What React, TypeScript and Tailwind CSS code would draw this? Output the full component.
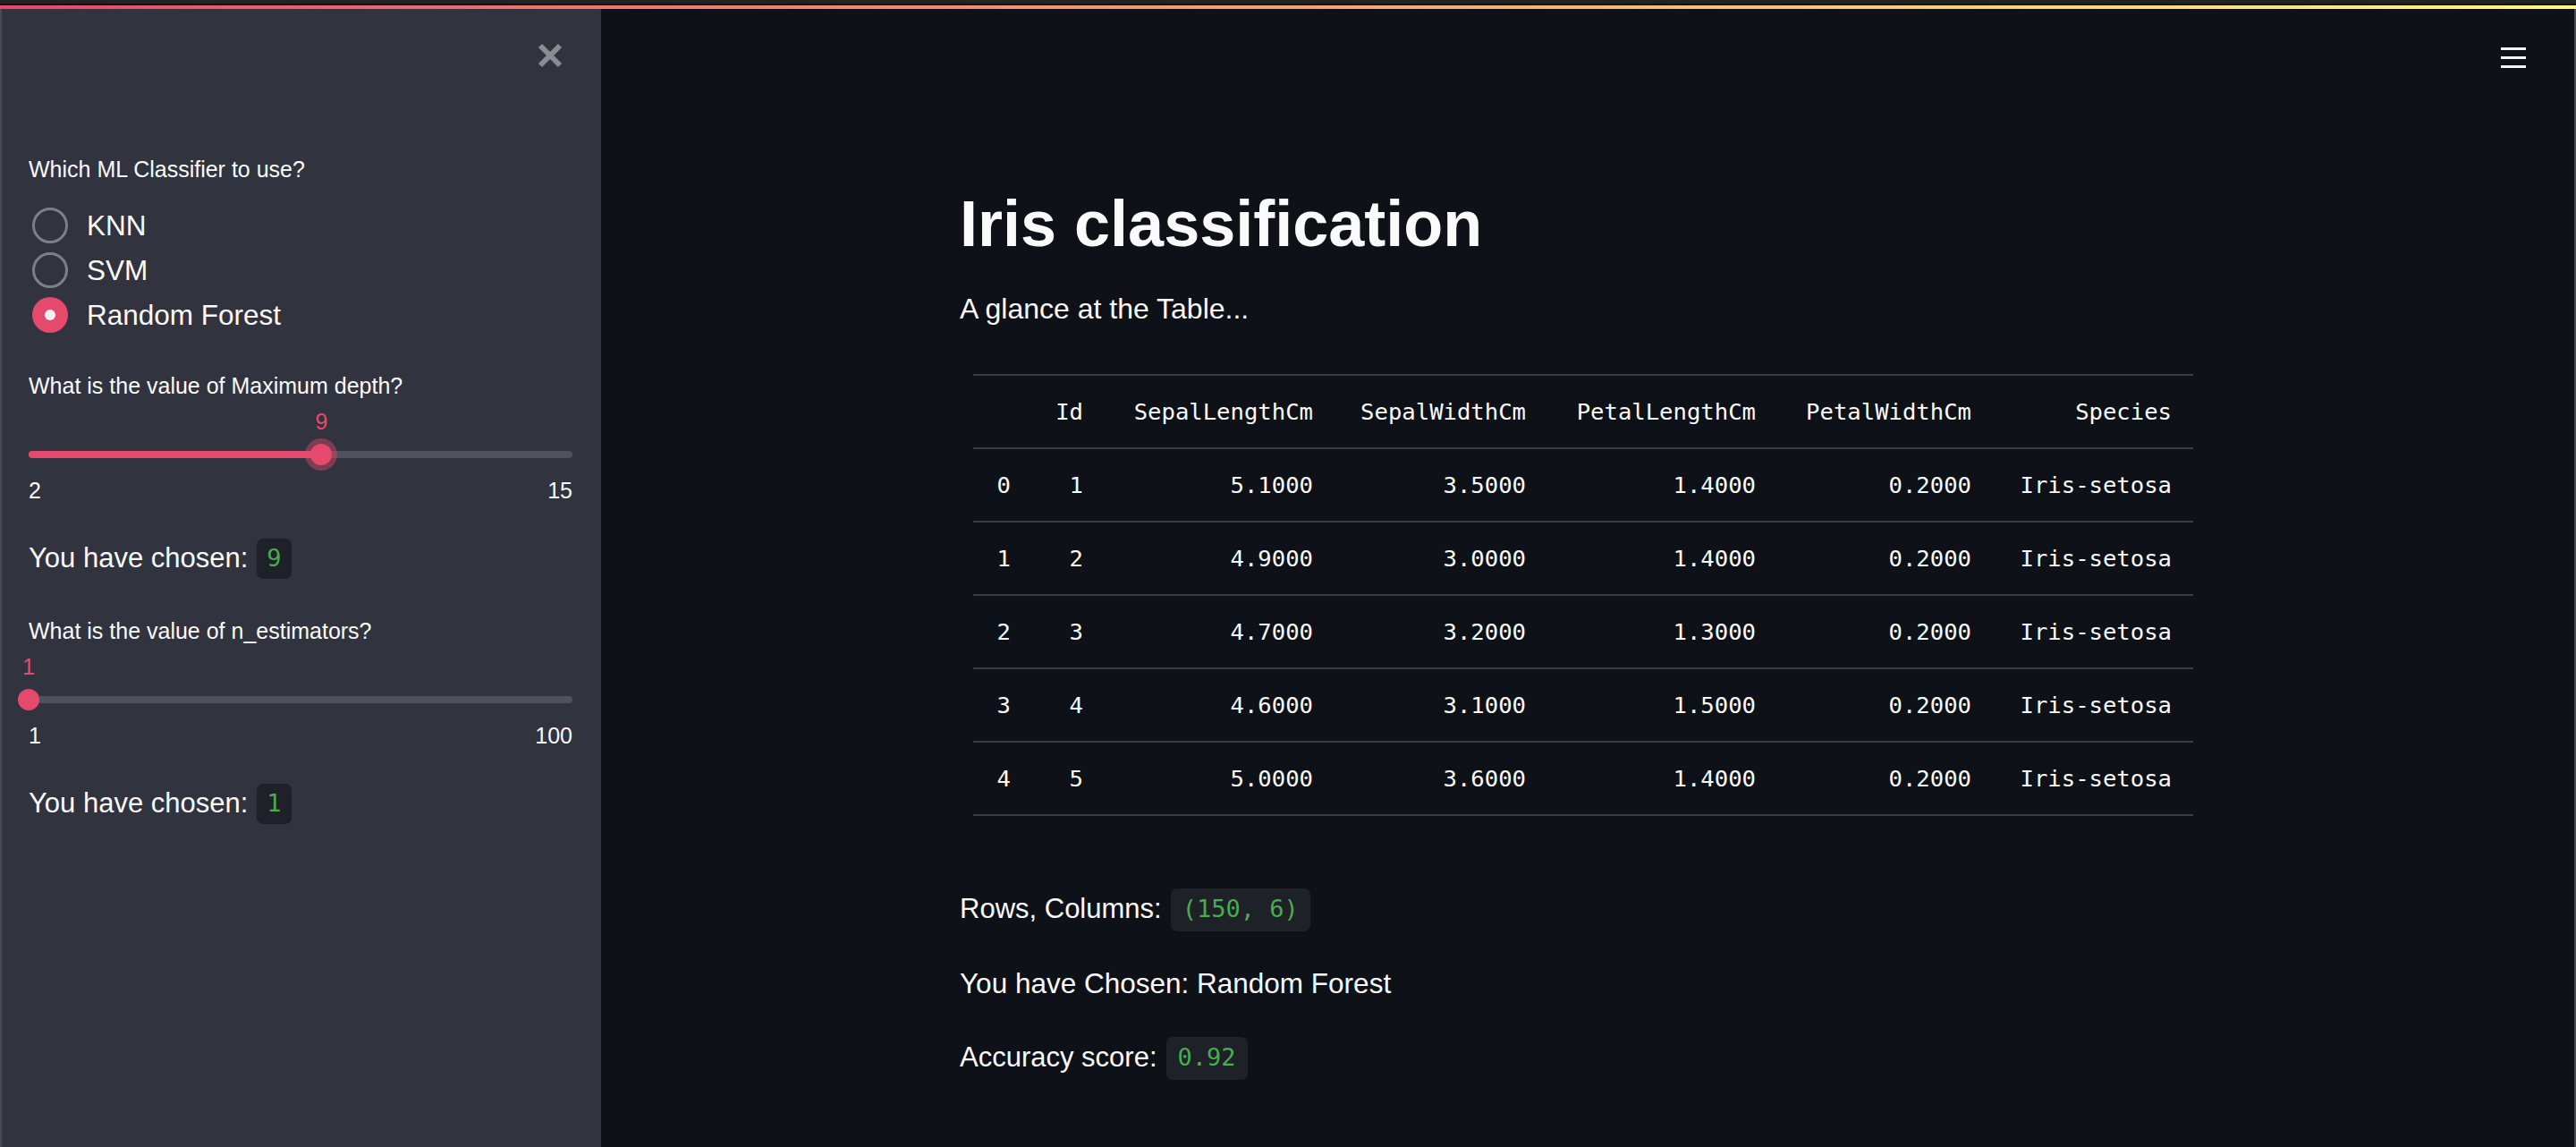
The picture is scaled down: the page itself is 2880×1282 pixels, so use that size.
import React from 'react';

const PINK = 'bg-[#e5496b]';

const tableRows = [
  ['0', '1', '5.1000', '3.5000', '1.4000', '0.2000', 'Iris-setosa'],
  ['1', '2', '4.9000', '3.0000', '1.4000', '0.2000', 'Iris-setosa'],
  ['2', '3', '4.7000', '3.2000', '1.3000', '0.2000', 'Iris-setosa'],
  ['3', '4', '4.6000', '3.1000', '1.5000', '0.2000', 'Iris-setosa'],
  ['4', '5', '5.0000', '3.6000', '1.4000', '0.2000', 'Iris-setosa'],
];

const headers = ['', 'Id', 'SepalLengthCm', 'SepalWidthCm', 'PetalLengthCm', 'PetalWidthCm', 'Species'];

const Code = ({ children, box }: { children: React.ReactNode; box: string }) => (
  <span
    className={`ml-[10px] inline-flex items-center rounded-[7px] bg-[#1e2128] font-['DejaVu_Sans_Mono',monospace] text-[#48ad4f] ${box}`}
  >
    {children}
  </span>
);

const Radio = ({ label, checked }: { label: string; checked?: boolean }) => (
  <div className="flex h-[50px] items-center">
    {checked ? (
      <span className={`ml-[4px] flex h-[40px] w-[40px] items-center justify-center rounded-full ${PINK}`}>
        <span className="h-[12px] w-[12px] rounded-full bg-[#f2f2f5]" />
      </span>
    ) : (
      <span className="ml-[4px] h-[40px] w-[40px] rounded-full border-[3px] border-[#7e7f85]" />
    )}
    <span className="ml-[21px] text-[31.5px] leading-[50px]">{label}</span>
  </div>
);

const Slider = ({
  label,
  min,
  max,
  value,
  focused,
}: {
  label: string;
  min: number;
  max: number;
  value: number;
  focused?: boolean;
}) => {
  const pct = ((value - min) / (max - min)) * 100;
  return (
    <div>
      <div className="h-[40px] text-[25px] leading-[40px]">{label}</div>
      <div className="relative mt-[5px] h-[30px]">
        <span
          className="absolute top-0 -translate-x-1/2 text-[25px] leading-[30px] text-[#e5496b]"
          style={{ left: `${pct}%` }}
        >
          {value}
        </span>
      </div>
      <div className="relative mt-[2px] flex h-[40px] items-center">
        <div className="h-[8px] w-full rounded-full bg-[#4f515e]">
          <div className={`h-full rounded-full ${PINK}`} style={{ width: `${pct}%` }} />
        </div>
        <div
          className={`absolute top-1/2 h-[24px] w-[24px] -translate-x-1/2 -translate-y-1/2 rounded-full ${PINK} ${
            focused ? 'shadow-[0_0_0_6px_rgba(229,73,107,0.42)]' : ''
          }`}
          style={{ left: `${pct}%` }}
        />
      </div>
      <div className="mt-[5px] flex justify-between text-[25px] leading-[30px]">
        <span>{min}</span>
        <span>{max}</span>
      </div>
    </div>
  );
};

export default function App() {
  return (
    <div className="flex h-[1282px] w-[2880px] flex-col overflow-hidden bg-[#0e1117] font-['Liberation_Sans',Arial,sans-serif] text-[#fafafa]">
      {/* window chrome + decoration bar */}
      <div className="h-[4px] bg-[#232323]" />
      <div className="h-[2px] bg-[#111111]" />
      <div className="h-[4px] bg-gradient-to-r from-[#e8466c] via-[#f2a276] to-[#fdf77f]" />

      <div className="flex flex-1 border-x-2 border-x-[#4a4b51]">
        {/* Sidebar */}
        <aside className="w-[670px] bg-[#31333f] pl-[30px] pr-[32px]">
          <div className="flex h-[66px] items-end justify-end pr-[11px]">
            <svg width="28" height="28" viewBox="0 0 28 28">
              <path d="M3 3 L25 25 M25 3 L3 25" stroke="#8b8c92" strokeWidth="6" />
            </svg>
          </div>

          <div className="mt-[93px] h-[40px] text-[25px] leading-[40px]">Which ML Classifier to use?</div>
          <div className="mt-[18px]">
            <Radio label="KNN" />
            <Radio label="SVM" />
            <Radio label="Random Forest" checked />
          </div>

          <div className="mt-[34px]">
            <Slider label="What is the value of Maximum depth?" min={2} max={15} value={9} focused />
          </div>
          <p className="mt-[36px] flex h-[51px] items-center text-[31px]">
            You have chosen:
            <Code box="h-[45px] px-[11px] text-[27px]">9</Code>
          </p>

          <div className="mt-[35px]">
            <Slider label="What is the value of n_estimators?" min={1} max={100} value={1} />
          </div>
          <p className="mt-[36px] flex h-[51px] items-center text-[31px]">
            You have chosen:
            <Code box="h-[45px] px-[11px] text-[27px]">1</Code>
          </p>
        </aside>

        {/* Main */}
        <main className="flex-1">
          <div className="flex h-[66px] items-end justify-end pr-[54px]">
            <div className="flex w-[28px] flex-col gap-[7px]">
              <span className="h-[3px] bg-[#f5f5f5]" />
              <span className="h-[3px] bg-[#f5f5f5]" />
              <span className="h-[3px] bg-[#f5f5f5]" />
            </div>
          </div>

          <div className="mx-auto w-[1404px]">
            <h1 className="mt-[131px] h-[86px] text-[72px] font-bold leading-[86px]">Iris classification</h1>
            <p className="mt-[27px] h-[51px] text-[32px] leading-[51px]">A glance at the Table...</p>

            <div className="ml-[15px] mt-[47px] w-[1364px] border-t-2 border-[#3b3d44] font-['DejaVu_Sans_Mono',monospace] text-[25.6px]">
              {[headers, ...tableRows].map((row, i) => (
                <div
                  key={i}
                  className="grid h-[82px] grid-cols-[66px_81px_257px_238px_257px_241px_224px] items-center border-b-2 border-[#3b3d44]"
                >
                  {row.map((cell, j) => (
                    <div key={j} className="pr-[24px] text-right">
                      {cell}
                    </div>
                  ))}
                </div>
              ))}
            </div>

            <p className="mt-[79px] flex h-[51px] items-center text-[31px]">
              Rows, Columns:
              <Code box="h-[48px] px-[13px] text-[27px]">(150, 6)</Code>
            </p>
            <p className="mt-[32px] h-[51px] text-[31.5px] leading-[51px]">You have Chosen: Random Forest</p>
            <p className="mt-[32px] flex h-[51px] items-center text-[31px]">
              Accuracy score:
              <Code box="h-[48px] px-[13px] text-[27px]">0.92</Code>
            </p>
          </div>
        </main>
      </div>
    </div>
  );
}
